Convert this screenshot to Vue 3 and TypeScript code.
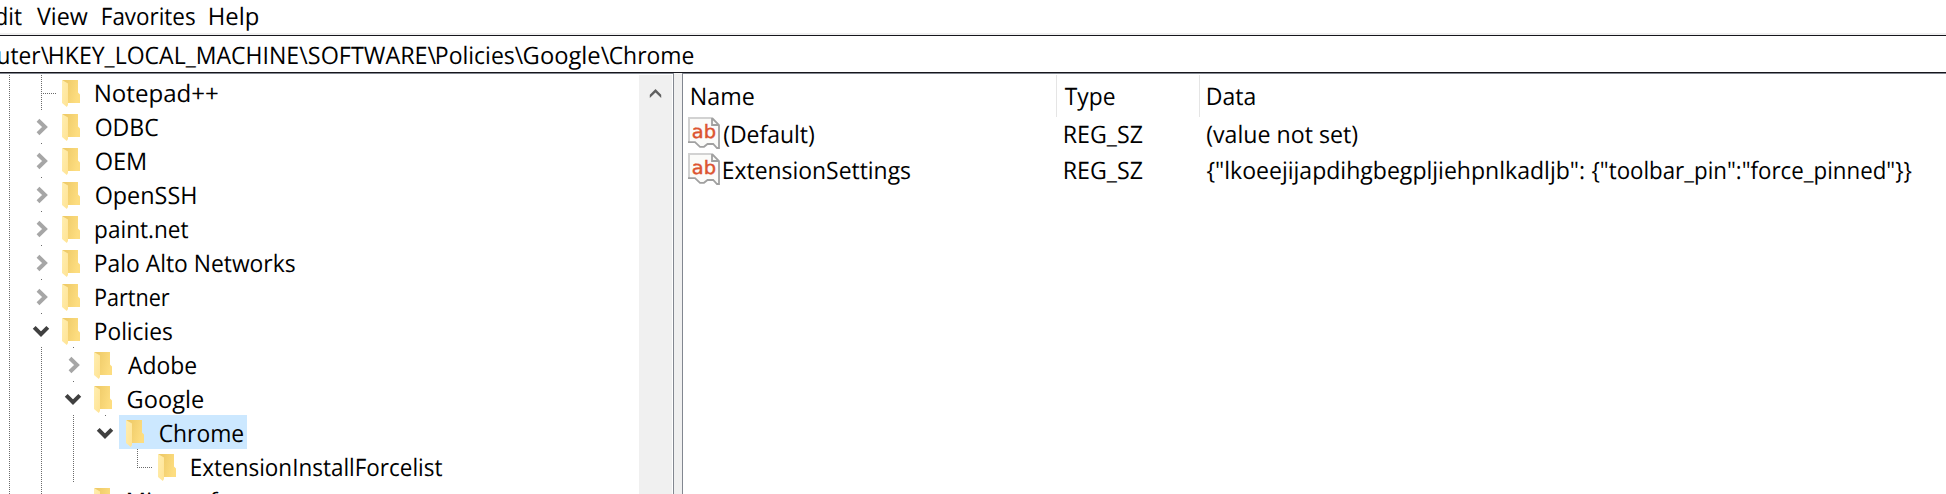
<script setup lang="ts">
type Toggle = 'none' | 'closed' | 'open'

interface Label {
  text: string
  width: number
}

interface Guide {
  x: number
  kind: 'full' | 'dot' | 'half' | 'elbow'
}

interface TreeRow extends Label {
  level: number
  toggle: Toggle
  selected?: boolean
  guides: Guide[]
}

interface RegistryValue {
  name: Label
  type: Label
  data: Label[]
}

/* Measuring at ten times the drawn size keeps the bounds free of hinting. */
const FONT_SIZE = 24
const PRECISION = 10
const pen = document.createElement('canvas').getContext('2d')!

/* Condenses a label so that its glyphs span exactly the given width. */
function fit(label: Label) {
  pen.font = `${FONT_SIZE * PRECISION}px "Open Sans"`
  const m = pen.measureText(label.text)
  const left = m.actualBoundingBoxLeft / PRECISION
  const ink = left + m.actualBoundingBoxRight / PRECISION
  const scale = label.width / ink
  return {
    transform: `translate(${left * scale}px, 1px) scaleX(${scale})`,
  }
}

const box = (label: Label) => ({ width: `${label.width}px` })

const menu: Label[] = [
  { text: 'Edit', width: 37.5 },
  { text: 'View', width: 50.6 },
  { text: 'Favorites', width: 91.6 },
  { text: 'Help', width: 48 },
]

const path: Label[] = [
  { text: 'Computer\\', width: 113.8 },
  { text: 'HKEY_LOCAL_MACHINE\\', width: 257.4 },
  { text: 'SOFTWARE\\', width: 127 },
  { text: 'Policies\\', width: 86 },
  { text: 'Google\\', width: 85.2 },
  { text: 'Chrome', width: 83.2 },
]

const root: Guide = { x: 9, kind: 'full' }
const tree: TreeRow[] = [
  { text: 'Notepad++', width: 121.6, level: 0, toggle: 'none', guides: [root, { x: 41, kind: 'full' }, { x: 41, kind: 'elbow' }] },
  { text: 'ODBC', width: 62, level: 0, toggle: 'closed', guides: [root, { x: 41, kind: 'dot' }] },
  { text: 'OEM', width: 49, level: 0, toggle: 'closed', guides: [root, { x: 41, kind: 'dot' }] },
  { text: 'OpenSSH', width: 99.2, level: 0, toggle: 'closed', guides: [root, { x: 41, kind: 'dot' }] },
  { text: 'paint.net', width: 92, level: 0, toggle: 'closed', guides: [root, { x: 41, kind: 'dot' }] },
  { text: 'Palo Alto Networks', width: 198.6, level: 0, toggle: 'closed', guides: [root, { x: 41, kind: 'dot' }] },
  { text: 'Partner', width: 73.4, level: 0, toggle: 'closed', guides: [root, { x: 41, kind: 'dot' }] },
  { text: 'Policies', width: 75.8, level: 0, toggle: 'open', guides: [root, { x: 41, kind: 'dot' }] },
  { text: 'Adobe', width: 68, level: 1, toggle: 'closed', guides: [root, { x: 41, kind: 'full' }, { x: 73, kind: 'dot' }] },
  { text: 'Google', width: 75, level: 1, toggle: 'open', guides: [root, { x: 41, kind: 'full' }, { x: 73, kind: 'dot' }] },
  { text: 'Chrome', width: 83, level: 2, toggle: 'open', selected: true, guides: [root, { x: 41, kind: 'full' }, { x: 73, kind: 'full' }, { x: 105, kind: 'dot' }] },
  { text: 'ExtensionInstallForcelist', width: 250, level: 3, toggle: 'none', guides: [root, { x: 41, kind: 'full' }, { x: 73, kind: 'full' }, { x: 137, kind: 'half' }, { x: 137, kind: 'elbow' }] },
  { text: 'Microsoft', width: 97, level: 1, toggle: 'none', guides: [root, { x: 41, kind: 'full' }] },
]

const columns: Label[] = [
  { text: 'Name', width: 61.6 },
  { text: 'Type', width: 49.4 },
  { text: 'Data', width: 46.4 },
]

const values: RegistryValue[] = [
  {
    name: { text: '(Default)', width: 90 },
    type: { text: 'REG_SZ', width: 77.2 },
    data: [{ text: '(value not set)', width: 150.2 }],
  },
  {
    name: { text: 'ExtensionSettings', width: 186 },
    type: { text: 'REG_SZ', width: 77.2 },
    data: [
      { text: '{"lkoeejijapdihgbegpljiehpnlkadljb":', width: 376.4 },
      { text: '{"toolbar_pin":"force_pinned"}}', width: 319.4 },
    ],
  },
]
</script>

<template>
  <main class="regedit">
    <nav class="menu">
      <span v-for="m in menu" :key="m.text" class="label" :style="box(m)"><span class="ink" :style="fit(m)">{{ m.text }}</span></span>
    </nav>

    <div class="address">
      <span v-for="p in path" :key="p.text" class="label" :style="box(p)"><span class="ink" :style="fit(p)">{{ p.text }}</span></span>
    </div>

    <div class="panes">
      <section class="tree-pane">
        <div class="tree">
          <div v-for="(row, r) in tree" :key="row.text" class="tree-row">
            <i v-for="(g, n) in row.guides" :key="n" class="guide" :class="g.kind" :style="{ left: `${g.x}px` }"></i>
            <div class="node" :style="{ marginLeft: `${23 + row.level * 32}px` }">
              <svg class="toggle" width="32" height="34" viewBox="0 0 32 34">
                <path v-if="row.toggle === 'closed'" d="M15 11.2L22 18L15 24.8" fill="none" stroke="#a6a6a6" stroke-width="4" />
                <path v-if="row.toggle === 'open'" d="M11.2 14.3L18 21.2L24.8 14.3" fill="none" stroke="#404040" stroke-width="4" />
              </svg>
              <div class="item" :class="{ selected: row.selected }">
                <svg class="folder" width="20" height="34" viewBox="0 0 20 34">
                  <defs>
                    <linearGradient :id="`back-${r}`" x1="0" x2="1" y1="0" y2="0.3">
                      <stop offset="0.2" stop-color="#efcb69" />
                      <stop offset="1" stop-color="#fddd80" />
                    </linearGradient>
                    <linearGradient :id="`flap-${r}`" x1="0" x2="1" y1="0" y2="1">
                      <stop offset="0" stop-color="#ffeeb0" />
                      <stop offset="1" stop-color="#ffe394" />
                    </linearGradient>
                  </defs>
                  <path d="M0.4 5H16V17.5L18 19.5V28H5V24L0.4 8Z" :fill="`url(#back-${r})`" />
                  <path d="M0 5L6 8.5V30L4.8 32L0 28Z" :fill="`url(#flap-${r})`" />
                </svg>
                <span class="label" :style="box(row)"><span class="ink" :style="fit(row)">{{ row.text }}</span></span>
              </div>
            </div>
          </div>
        </div>
        <div class="scrollbar">
          <svg width="33" height="33" viewBox="0 0 33 33">
            <path d="M10.8 22V18.7L16.5 13L22.2 18.7V22L16.5 16.6Z" fill="#606060" />
          </svg>
        </div>
      </section>

      <section class="value-pane">
        <header class="grid head">
          <div v-for="c in columns" :key="c.text" class="cell"><span class="label" :style="box(c)"><span class="ink" :style="fit(c)">{{ c.text }}</span></span></div>
        </header>
        <div v-for="v in values" :key="v.name.text" class="grid value">
          <div class="cell name">
            <svg class="string-icon" width="32" height="32" viewBox="0 0 32 32">
              <path d="M1 1H24L31 8V31H29L25 27H19L16 30H12L7 25.5H1Z" fill="#fbfbf9" />
              <path d="M1 25V1H24" fill="none" stroke="#d2d2d2" stroke-width="2" />
              <path d="M24 1V8H31M24 1L31 8V31H29L25.2 27H19.5L16 29.8H12L7 25.2H0" fill="none" stroke="#a0a0a0" stroke-width="1.8" />
              <text x="3.8" y="21" textLength="24.2" lengthAdjust="spacingAndGlyphs">ab</text>
            </svg>
            <span class="label" :style="box(v.name)"><span class="ink" :style="fit(v.name)">{{ v.name.text }}</span></span>
          </div>
          <div class="cell"><span class="label" :style="box(v.type)"><span class="ink" :style="fit(v.type)">{{ v.type.text }}</span></span></div>
          <div class="cell data">
            <span v-for="d in v.data" :key="d.text" class="label" :style="box(d)"><span class="ink" :style="fit(d)">{{ d.text }}</span></span>
          </div>
        </div>
      </section>
    </div>
  </main>
</template>

<style>
body {
  margin: 0;
  overflow: hidden;
}
</style>

<style scoped>
.regedit {
  display: flex;
  flex-direction: column;
  box-sizing: border-box;
  width: 1946px;
  height: 494px;
  overflow: hidden;
  background: #fff;
  color: #000;
  font: 24px "Open Sans", "Noto Sans", sans-serif;
  text-rendering: geometricPrecision;
}
.label {
  display: block;
  flex: none;
  white-space: pre;
}
.ink {
  display: inline-block;
  transform-origin: 0 0;
}
.menu {
  display: flex;
  flex: none;
  gap: 15.6px;
  height: 33px;
  line-height: 32px;
  margin-left: -16px;
  border-bottom: 2px solid #f0f0f0;
}
.address {
  display: flex;
  flex: none;
  gap: 1.1px;
  height: 36px;
  line-height: 37px;
  border-top: 1px solid #16161c;
  border-bottom: 1px solid #16161c;
}
.address .label:first-child {
  margin-left: -64.8px;
}
.panes {
  display: flex;
  flex: 1;
  min-height: 0;
  background: #f0f0f0;
}
.tree-pane {
  display: flex;
  box-sizing: border-box;
  width: 674px;
  padding: 1px 1px 0 0;
  border-top: 1px solid #828790;
  border-right: 1px solid #828790;
  background: #fff;
}
.tree {
  width: 639px;
  overflow: hidden;
}
.tree-row {
  position: relative;
  height: 34px;
}
.node,
.item {
  display: flex;
  width: max-content;
  height: 34px;
  line-height: 36px;
}
.toggle {
  flex: none;
}
.item {
  padding: 0 4px 0 7px;
}
.item .folder {
  flex: none;
  margin-right: 14px;
}
.selected {
  background: #cce8ff;
}
.guide {
  position: absolute;
  top: 0;
  width: 1px;
  height: 34px;
  background: repeating-linear-gradient(#6a6a6a 0 1px, transparent 1px 2px);
}
.guide.dot {
  height: 1px;
}
.guide.half {
  height: 18px;
}
.guide.elbow {
  top: 18px;
  width: 15px;
  height: 1px;
  background: repeating-linear-gradient(90deg, #6a6a6a 0 1px, transparent 1px 2px);
}
.scrollbar {
  width: 33px;
  background: #f0f0f0;
}
.scrollbar svg {
  display: block;
  margin-top: 1px;
}
.value-pane {
  flex: 1;
  margin-left: 8px;
  border-top: 1px solid #828790;
  border-left: 1px solid #828790;
  background: #fff;
}
.grid {
  display: grid;
  grid-template-columns: 374px 143px 1fr;
}
.head {
  height: 40px;
  padding-top: 1px;
  line-height: 42px;
}
.cell {
  display: flex;
  box-sizing: border-box;
  min-width: 0;
  padding-left: 7.8px;
}
.head .cell:first-child {
  padding-left: 9px;
}
.head .cell:not(:last-child) {
  border-right: 1px solid #e5e5e5;
}
.value {
  height: 36px;
  line-height: 37px;
}
.value .name {
  padding-left: 5px;
}
.value .data {
  gap: 8px;
  padding-left: 7.3px;
}
.string-icon {
  flex: none;
  margin: 2px 3.5px 0 0;
}
.string-icon text {
  font: 18.5px "DejaVu Sans", sans-serif;
  fill: #dc5430;
  stroke: #dc5430;
  stroke-width: 0.45;
}
</style>
